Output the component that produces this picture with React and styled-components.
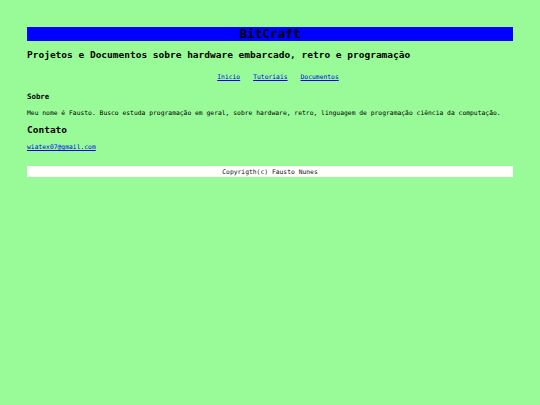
import React from "react";
import styled, { createGlobalStyle } from "styled-components";

const Global = createGlobalStyle`
  html, body { margin: 0; padding: 0; }
  body {
    background: #98fb98;
    font-family: "DejaVu Sans Mono", "Liberation Mono", monospace;
    font-size: 6.35px;
    color: #000;
  }
`;

const Page = styled.div`
  padding: 27px;
  display: flex;
  flex-direction: column;
`;

const Banner = styled.header`
  background: #0000ff;
  height: 14px;
  display: flex;
  align-items: center;
  justify-content: center;
`;

const Title = styled.h1`
  margin: 0;
  font-size: 12.7px;
  line-height: 14px;
  font-weight: bold;
  color: #000;
`;

const Subtitle = styled.h2`
  margin: 8px 0 0;
  font-size: 9.5px;
  line-height: 12px;
  font-weight: bold;
`;

const Nav = styled.nav`
  margin-top: 12px;
  padding-left: 16px;
  display: flex;
  justify-content: center;
  gap: 13px;
  line-height: 8px;
`;

const Link = styled.a`
  color: #0000ee;
  text-decoration: underline;
`;

const SectionTitle = styled.h3`
  margin: ${(p) => p.$mt || 0}px 0 0;
  font-size: ${(p) => p.$size}px;
  line-height: ${(p) => p.$lh}px;
  font-weight: bold;
`;

const Text = styled.p`
  margin: 7px 0 0;
  line-height: 8px;
`;

const Footer = styled.footer`
  margin-top: 15px;
  background: #fff;
  height: 11px;
  line-height: 11px;
  text-align: center;
  color: #111;
`;

export default function App() {
  return (
    <>
      <Global />
      <Page>
        <Banner>
          <Title>BitCraft</Title>
        </Banner>
        <Subtitle>Projetos e Documentos sobre hardware embarcado, retro e programação</Subtitle>
        <Nav>
          <Link href="#">Inicio</Link>
          <Link href="#">Tutoriais</Link>
          <Link href="#">Documentos</Link>
        </Nav>
        <SectionTitle $mt={11} $size={7.4} $lh={10}>Sobre</SectionTitle>
        <Text>
          Meu nome é Fausto. Busco estuda programação em geral, sobre hardware, retro, linguagem de programação ciência da computação.
        </Text>
        <SectionTitle as="h2" $mt={7} $size={9.5} $lh={12}>Contato</SectionTitle>
        <Text>
          <Link href="#">wiatex07@gmail.com</Link>
        </Text>
        <Footer>Copyrigth(c) Fausto Nunes</Footer>
      </Page>
    </>
  );
}
